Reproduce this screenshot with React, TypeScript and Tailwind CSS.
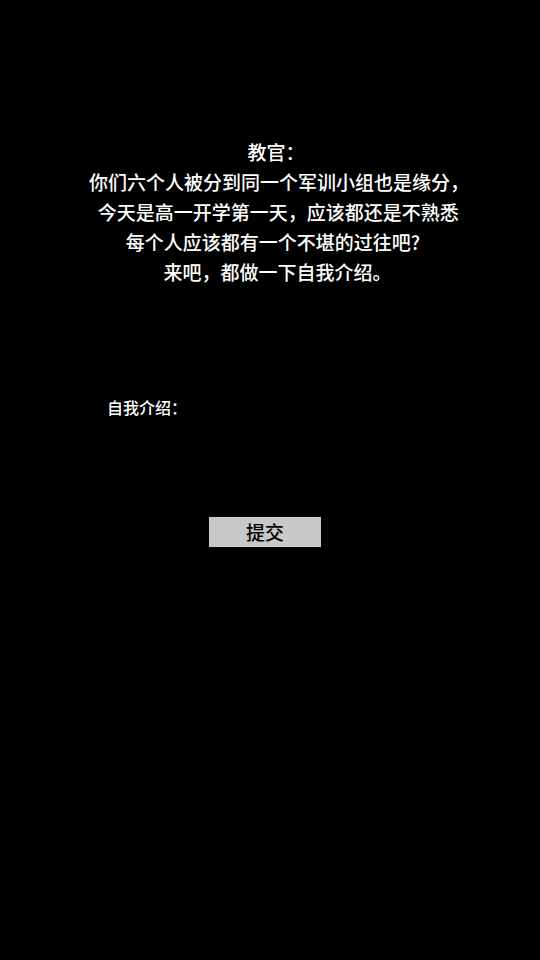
export default function App() {
  const lines: { text: string; cls: string }[] = [
    { text: "教官：", cls: "pl-[12px]" },
    { text: "你们六个人被分到同一个军训小组也是缘分，", cls: "pl-[18px]" },
    { text: "\u00a0今天是高一开学第一天，应该都还是不熟悉", cls: "pl-[12px]" },
    { text: "每个人应该都有一个不堪的过往吧?", cls: "pl-[6px]" },
    { text: "来吧，都做一下自我介绍。", cls: "pl-[15px]" },
  ];
  return (
    <div
      className="flex h-[960px] w-[540px] flex-col bg-black text-white"
      style={{ fontFamily: '"Noto Sans CJK SC", "Noto Sans", sans-serif' }}
    >
      <div className="mt-[137px] flex flex-col items-center text-[19px] font-medium leading-[30px]">
        {lines.map((l, i) => (
          <div key={i} className={`whitespace-pre ${l.cls}`}>
            {l.text}
          </div>
        ))}
      </div>

      <div className="mt-[105px] pl-[107px] text-[16px] font-medium leading-[30px]">自我介绍：</div>

      <div className="mt-[95px] flex pl-[209px]">
        <button
          type="button"
          className="h-[30px] w-[112px] bg-[#c8c8c8] text-[19px] font-medium leading-[30px] text-black"
        >
          提交
        </button>
      </div>
    </div>
  );
}
